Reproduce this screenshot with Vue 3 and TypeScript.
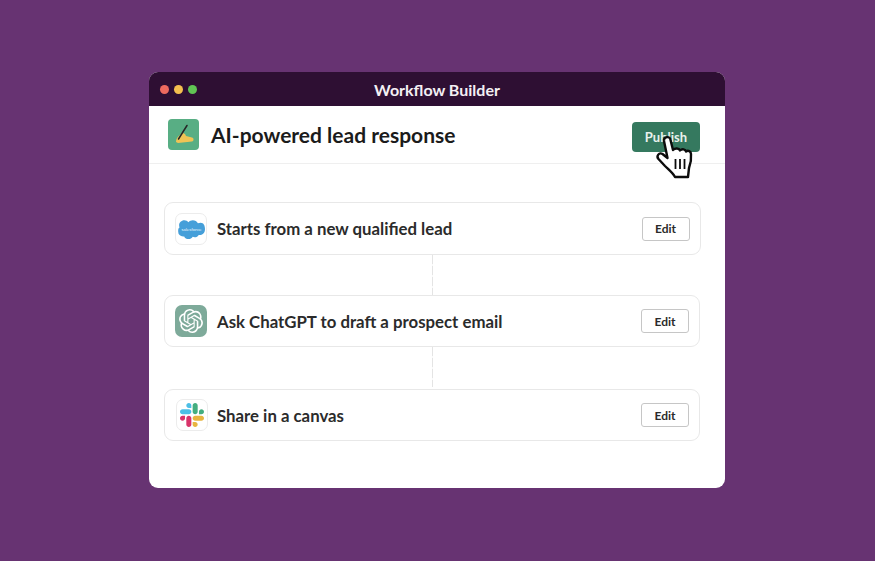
<script setup lang="ts">
interface Step {
  id: string;
  label: string;
  spaced: boolean;
}
const steps: Step[] = [
  { id: "salesforce", label: "Starts from a new qualified lead", spaced: false },
  { id: "openai", label: "Ask ChatGPT to draft a prospect email", spaced: true },
  { id: "slack", label: "Share in a canvas", spaced: true },
];
</script>

<template>
  <div class="stage">
    <div class="window">
      <div class="titlebar">
        <div class="dots">
          <span class="dot red"></span>
          <span class="dot yellow"></span>
          <span class="dot green"></span>
        </div>
        <span class="title">Workflow Builder</span>
      </div>
      <div class="header">
        <div class="header-left">
          <div class="app-icon">
            <svg width="31" height="31" viewBox="0 0 31 31">
              <path d="M8 23 C8 20 9.5 18 11 17 L14 13.5 L17 15 L18 17 L24 18.5 C26 19 26 22 24 22.5 L10 24 Z" fill="#f0c455" />
              <path d="M19 6.5 L10.5 20" stroke="#262626" stroke-width="1.5" stroke-linecap="round" fill="none" />
            </svg>
          </div>
          <h1 class="heading">AI-powered lead response</h1>
        </div>
        <button class="publish">Publish</button>
        <svg class="cursor" width="42" height="46" viewBox="0 0 42 46">
          <path d="M9 6 C8.5 1.5 15 0.5 15.5 5 L18 15 C20 13 24 13 25 15.5 C27 13.5 30.5 14 31 16.5 C33 15 36 16 36 19 C36.5 24 35.5 29 34 33 L33 42 L20 42 C18 38 14 35 10 31 L3.5 24 C1 21 4 17 7.5 19 L12.5 23 Z" fill="#fff" stroke="#0c0c0c" stroke-width="2.4" stroke-linejoin="round" />
          <path d="M20.5 24 V34 M25 24 V34 M29.5 24 V34" stroke="#0c0c0c" stroke-width="1.8" fill="none" />
        </svg>
      </div>
      <div class="steps">
        <template v-for="step in steps" :key="step.id">
          <div v-if="step.spaced" class="connector"></div>
          <div class="card" :class="'card-' + step.id">
            <div class="step-icon" :class="'icon-' + step.id">
              <svg v-if="step.id === 'salesforce'" width="28" height="20" viewBox="0 0 28 20">
                <path d="M11.5 3.2 C12.6 2 14.1 1.3 15.8 1.3 C18 1.3 19.9 2.5 20.9 4.3 C21.8 3.9 22.7 3.7 23.6 3.7 C26.7 3.7 28 6.7 28 10 C28 13.6 26 16 22.9 16 C22.5 16 22.1 16 21.7 15.9 C20.9 17.3 19.4 18.2 17.7 18.2 C17 18.2 16.3 18 15.7 17.7 C14.9 19.4 13.2 20 11.4 20 C9.6 20 7.9 19.2 7.2 17.4 C6.8 17.5 6.5 17.5 6.1 17.5 C3.2 17.5 1.2 15.5 1.2 12.8 C1.2 11 1 9.5 2.5 8.5 C2.2 7.8 2.1 7 2.1 6.3 C2.1 3.5 4.4 1.2 7.3 1.2 C9 1.2 10.5 2 11.5 3.2 Z" fill="#459fd9" />
                <text x="14.5" y="12" text-anchor="middle" class="sf-text">salesforce</text>
              </svg>
              <svg v-else-if="step.id === 'openai'" width="24" height="24" viewBox="0 0 24 24">
                <path fill="#fff" d="M22.2819 9.8211a5.9847 5.9847 0 0 0-.5157-4.9108 6.0462 6.0462 0 0 0-6.5098-2.9A6.0651 6.0651 0 0 0 4.9807 4.1818a5.9847 5.9847 0 0 0-3.9977 2.9 6.0462 6.0462 0 0 0 .7427 7.0966 5.98 5.98 0 0 0 .511 4.9107 6.051 6.051 0 0 0 6.5146 2.9001A5.9847 5.9847 0 0 0 13.2599 24a6.0557 6.0557 0 0 0 5.7718-4.2058 5.9894 5.9894 0 0 0 3.9977-2.9001 6.0557 6.0557 0 0 0-.7475-7.0729zm-9.022 12.6081a4.4755 4.4755 0 0 1-2.8764-1.0408l.1419-.0804 4.7783-2.7582a.7948.7948 0 0 0 .3927-.6813v-6.7369l2.02 1.1686a.071.071 0 0 1 .038.052v5.5826a4.504 4.504 0 0 1-4.4945 4.4944zm-9.6607-4.1254a4.4708 4.4708 0 0 1-.5346-3.0137l.142.0852 4.783 2.7582a.7712.7712 0 0 0 .7806 0l5.8428-3.3685v2.3324a.0804.0804 0 0 1-.0332.0615L9.74 19.9502a4.4992 4.4992 0 0 1-6.1408-1.6464zM2.3408 7.8956a4.485 4.485 0 0 1 2.3655-1.9728V11.6a.7664.7664 0 0 0 .3879.6765l5.8144 3.3543-2.0201 1.1685a.0757.0757 0 0 1-.071 0l-4.8303-2.7865A4.504 4.504 0 0 1 2.3408 7.872zm16.5963 3.8558L13.1038 8.364 15.1192 7.2a.0757.0757 0 0 1 .071 0l4.8303 2.7913a4.4944 4.4944 0 0 1-.6765 8.1042v-5.6772a.79.79 0 0 0-.407-.667zm2.0107-3.0231l-.142-.0852-4.7735-2.7818a.7759.7759 0 0 0-.7854 0L9.409 9.2297V6.8974a.0662.0662 0 0 1 .0284-.0615l4.8303-2.7866a4.4992 4.4992 0 0 1 6.6802 4.66zM8.3065 12.863l-2.02-1.1638a.0804.0804 0 0 1-.038-.0567V6.0742a4.4992 4.4992 0 0 1 7.3757-3.4537l-.142.0805L8.704 5.459a.7948.7948 0 0 0-.3927.6813zm1.0976-2.3654l2.602-1.4998 2.6069 1.4998v2.9994l-2.5974 1.4997-2.6067-1.4997Z" />
              </svg>
              <svg v-else width="24" height="24" viewBox="0 0 122.8 122.8">
                <path fill="#d9346a" d="M25.8 77.6c0 7.1-5.8 12.9-12.9 12.9S0 84.7 0 77.6s5.8-12.9 12.9-12.9h12.9v12.9zM32.3 77.6c0-7.1 5.8-12.9 12.9-12.9s12.9 5.8 12.9 12.9v32.3c0 7.1-5.8 12.9-12.9 12.9s-12.9-5.8-12.9-12.9V77.6z" />
                <path fill="#4cbfe6" d="M45.2 25.8c-7.1 0-12.9-5.8-12.9-12.9S38.1 0 45.2 0s12.9 5.8 12.9 12.9v12.9H45.2zM45.2 32.3c7.1 0 12.9 5.8 12.9 12.9s-5.8 12.9-12.9 12.9H12.9C5.8 58.1 0 52.3 0 45.2s5.8-12.9 12.9-12.9h32.3z" />
                <path fill="#44ae80" d="M97 45.2c0-7.1 5.8-12.9 12.9-12.9s12.9 5.8 12.9 12.9-5.8 12.9-12.9 12.9H97V45.2zM90.5 45.2c0 7.1-5.8 12.9-12.9 12.9s-12.9-5.8-12.9-12.9V12.9C64.7 5.8 70.5 0 77.6 0s12.9 5.8 12.9 12.9v32.3z" />
                <path fill="#e8b540" d="M77.6 97c7.1 0 12.9 5.8 12.9 12.9s-5.8 12.9-12.9 12.9-12.9-5.8-12.9-12.9V97h12.9zM77.6 90.5c-7.1 0-12.9-5.8-12.9-12.9s5.8-12.9 12.9-12.9h32.3c7.1 0 12.9 5.8 12.9 12.9s-5.8 12.9-12.9 12.9H77.6z" />
              </svg>
            </div>
            <span class="label">{{ step.label }}</span>
            <button class="edit">Edit</button>
          </div>
        </template>
      </div>
    </div>
  </div>
</template>

<style>
html,
body {
  margin: 0;
  background: #673372;
}
</style>

<style scoped>
.stage {
  width: 875px;
  height: 561px;
  box-sizing: border-box;
  padding: 72px 0 0 149px;
  background: #673372;
  font-family: Lato, "Liberation Sans", sans-serif;
  overflow: hidden;
}
.window {
  width: 576px;
  height: 416px;
  background: #fff;
  border-radius: 9px;
  overflow: hidden;
}
.titlebar {
  height: 34px;
  background: #2e0f33;
  display: flex;
  align-items: center;
  justify-content: center;
  position: relative;
}
.dots {
  position: absolute;
  left: 11px;
  top: 13px;
  display: flex;
  gap: 5px;
}
.dot {
  width: 9px;
  height: 9px;
  border-radius: 50%;
}
.red { background: #ee6a5f; }
.yellow { background: #f4bf4f; }
.green { background: #61c454; }
.title {
  color: #f4eff4;
  font-size: 16px;
  font-weight: 700;
}
.header {
  position: relative;
  height: 58px;
  box-sizing: border-box;
  border-bottom: 1px solid #efefef;
  padding: 0 25px 0 19px;
  display: flex;
  align-items: center;
  justify-content: space-between;
}
.header-left {
  display: flex;
  align-items: center;
  gap: 12px;
}
.app-icon {
  width: 31px;
  height: 31px;
  border-radius: 4px;
  background: #58ae84;
}
.app-icon svg,
.step-icon svg {
  display: block;
}
.heading {
  margin: 0;
  font-size: 21px;
  font-weight: 700;
  color: #1b1b1b;
}
.publish {
  width: 68px;
  height: 30px;
  margin-top: 4px;
  padding: 0;
  border: 0;
  border-radius: 4px;
  background: #35795f;
  color: #e8f1ed;
  font-family: inherit;
  font-size: 13px;
  font-weight: 700;
}
.cursor {
  position: absolute;
  left: 506px;
  top: 29px;
}
.steps {
  padding: 38px 25px 0 15px;
  display: flex;
  flex-direction: column;
}
.card {
  box-sizing: border-box;
  height: 52px;
  border: 1px solid #e8e8e8;
  border-radius: 9px;
  padding: 0 10px;
  display: flex;
  align-items: center;
  gap: 10px;
}
.card-salesforce {
  height: 53px;
  width: 536.5px;
}
.card-slack {
  padding-left: 11px;
  gap: 9px;
}
.connector {
  width: 1px;
  height: 40px;
  margin-left: 268px;
  background: repeating-linear-gradient(to bottom, #e4e4e4 0 9px, #f8f8f8 9px 11px);
}
.connector + .card-slack {
  margin-top: 2px;
}
.step-icon {
  box-sizing: border-box;
  width: 32px;
  height: 32px;
  border-radius: 7px;
  display: flex;
  align-items: center;
  justify-content: center;
  flex: none;
}
.icon-salesforce,
.icon-slack {
  border: 1px solid #ececec;
  background: #fff;
}
.icon-openai {
  background: #7eaa9a;
}
.sf-text {
  font-family: Lato, sans-serif;
  font-size: 4.6px;
  fill: #e6f4fb;
}
.label {
  flex: 1;
  font-size: 16.8px;
  font-weight: 700;
  color: #2b2b2b;
}
.edit {
  width: 48px;
  height: 24px;
  padding: 0;
  border: 1px solid #c6c6c6;
  border-radius: 3px;
  background: #fff;
  color: #2b2b2b;
  font-family: inherit;
  font-size: 12px;
  font-weight: 700;
}
</style>
